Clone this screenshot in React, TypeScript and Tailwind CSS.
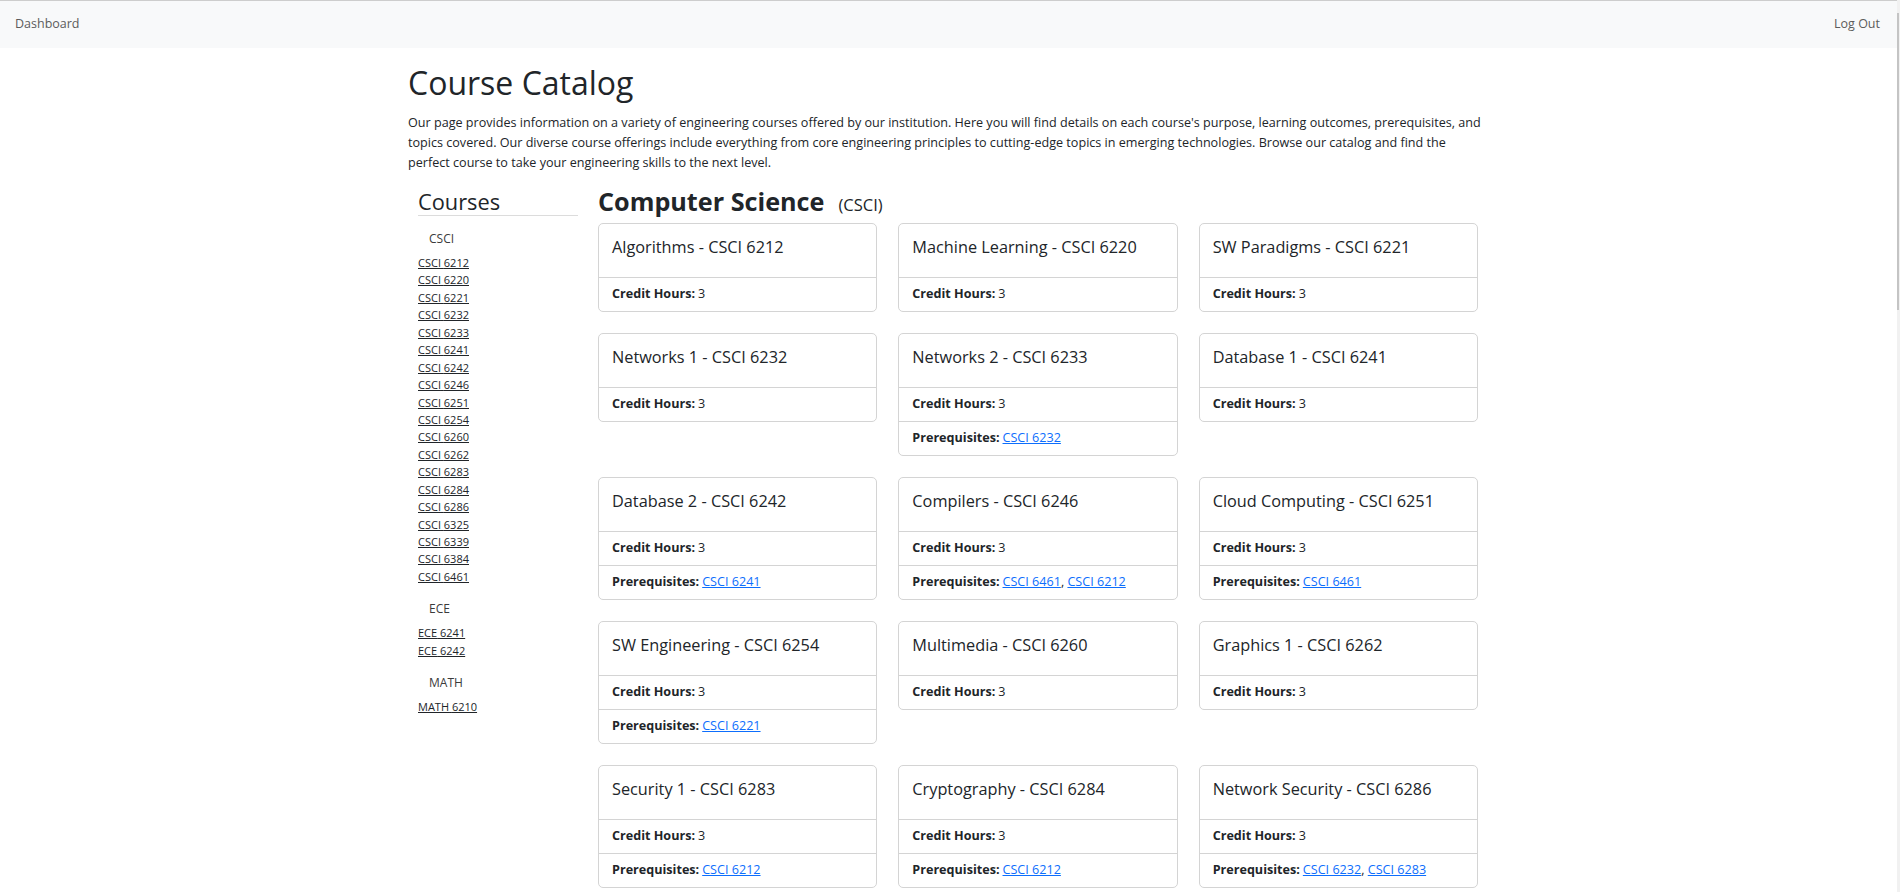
import React from 'react';

type Course = { title: string; code: string; prereqs: string[] };

const courses: Course[] = [
  { title: 'Algorithms', code: 'CSCI 6212', prereqs: [] },
  { title: 'Machine Learning', code: 'CSCI 6220', prereqs: [] },
  { title: 'SW Paradigms', code: 'CSCI 6221', prereqs: [] },
  { title: 'Networks 1', code: 'CSCI 6232', prereqs: [] },
  { title: 'Networks 2', code: 'CSCI 6233', prereqs: ['CSCI 6232'] },
  { title: 'Database 1', code: 'CSCI 6241', prereqs: [] },
  { title: 'Database 2', code: 'CSCI 6242', prereqs: ['CSCI 6241'] },
  { title: 'Compilers', code: 'CSCI 6246', prereqs: ['CSCI 6461', 'CSCI 6212'] },
  { title: 'Cloud Computing', code: 'CSCI 6251', prereqs: ['CSCI 6461'] },
  { title: 'SW Engineering', code: 'CSCI 6254', prereqs: ['CSCI 6221'] },
  { title: 'Multimedia', code: 'CSCI 6260', prereqs: [] },
  { title: 'Graphics 1', code: 'CSCI 6262', prereqs: [] },
  { title: 'Security 1', code: 'CSCI 6283', prereqs: ['CSCI 6212'] },
  { title: 'Cryptography', code: 'CSCI 6284', prereqs: ['CSCI 6212'] },
  { title: 'Network Security', code: 'CSCI 6286', prereqs: ['CSCI 6232', 'CSCI 6283'] },
];

const sidebar = [
  {
    dept: 'CSCI',
    codes: [
      '6212', '6220', '6221', '6232', '6233', '6241', '6242', '6246', '6251', '6254',
      '6260', '6262', '6283', '6284', '6286', '6325', '6339', '6384', '6461',
    ],
  },
  { dept: 'ECE', codes: ['6241', '6242'] },
  { dept: 'MATH', codes: ['6210'] },
];

const CourseCard: React.FC<{ course: Course }> = ({ course }) => (
  <div className="rounded-[5px] border border-[#d4d4d4] bg-white">
    <div className="h-[53px] px-[13px] pt-[14px]">
      <h5 className="text-[16.3px] leading-[19px] text-[#212529]">
        {course.title} - {course.code}
      </h5>
    </div>
    <div className="flex h-[34px] items-center border-t border-[#d4d4d4] px-[13px] text-[12.6px]">
      <span className="font-bold">Credit Hours:</span>
      <span className="ml-[3px]">3</span>
    </div>
    {course.prereqs.length > 0 && (
      <div className="flex h-[34px] items-center border-t border-[#d4d4d4] px-[13px] text-[12.6px]">
        <span className="font-bold">Prerequisites:</span>
        <span className="ml-[3px]">
          {course.prereqs.map((p, i) => (
            <React.Fragment key={p}>
              {i > 0 && ', '}
              <a href="#" className="text-[#0d6efd] underline">
                {p}
              </a>
            </React.Fragment>
          ))}
        </span>
      </div>
    )}
  </div>
);

export default function App() {
  return (
    <div className="relative h-[892px] overflow-hidden bg-white font-['Open_Sans',sans-serif] text-[#212529]">
      {/* top bar */}
      <nav className="flex h-[48px] items-center justify-between border-t border-[#cdcdcd] bg-[#f8f9fa] pl-[15px] pr-[20px] text-[12.5px] text-[#5c5c5c]">
        <a href="#">Dashboard</a>
        <a href="#">Log Out</a>
      </nav>

      <div className="pr-[4px]">
        <div className="mx-auto w-[1080px]">
          <h1 className="mt-[16px] text-[32px] font-medium leading-[37px]">Course Catalog</h1>
          <p className="mt-[12px] text-[12.6px] leading-[20px]">
            Our page provides information on a variety of engineering courses offered by our institution. Here you
            will find details on each course's purpose, learning outcomes, prerequisites, and topics covered. Our
            diverse course offerings include everything from core engineering principles to cutting-edge topics in
            emerging technologies. Browse our catalog and find the perfect course to take your engineering skills to
            the next level.
          </p>

          <div className="mt-[16px] flex">
            <aside className="w-[180px] shrink-0 px-[10px]">
              <h3 className="border-b border-[#dcdcdc] pb-[1px] text-[21.8px] leading-[25px]">Courses</h3>
              {sidebar.map((g, gi) => (
                <div key={g.dept} className={gi === 0 ? 'mt-[14px]' : 'mt-[15px]'}>
                  <div className="pl-[11px] text-[12px] leading-[18px] text-[#3b3b3b]">{g.dept}</div>
                  <ul className="mt-[6px]">
                    {g.codes.map((c) => (
                      <li key={c} className="text-[11px] leading-[17.44px]">
                        <a href="#" className="text-[#212529] underline">
                          {g.dept} {c}
                        </a>
                      </li>
                    ))}
                  </ul>
                </div>
              ))}
            </aside>

            <main className="flex-1 px-[10px]">
              <h2 className="-mt-[3px] flex items-baseline text-[25.2px] font-bold leading-[30px]">
                Computer Science
                <span className="ml-[14px] text-[16.5px] font-normal">(CSCI)</span>
              </h2>
              <div className="mt-[3px] grid grid-cols-3 items-start gap-x-[21px] gap-y-[21px]">
                {courses.map((c) => (
                  <CourseCard key={c.code} course={c} />
                ))}
              </div>
            </main>
          </div>
        </div>
      </div>

      {/* page scrollbar */}
      <div className="absolute right-0 top-0 h-full w-[3px] bg-[#f1f1f1]">
        <div className="absolute right-[1px] top-[13px] h-[297px] w-[2px] bg-[#c4c4c4]" />
      </div>
    </div>
  );
}
